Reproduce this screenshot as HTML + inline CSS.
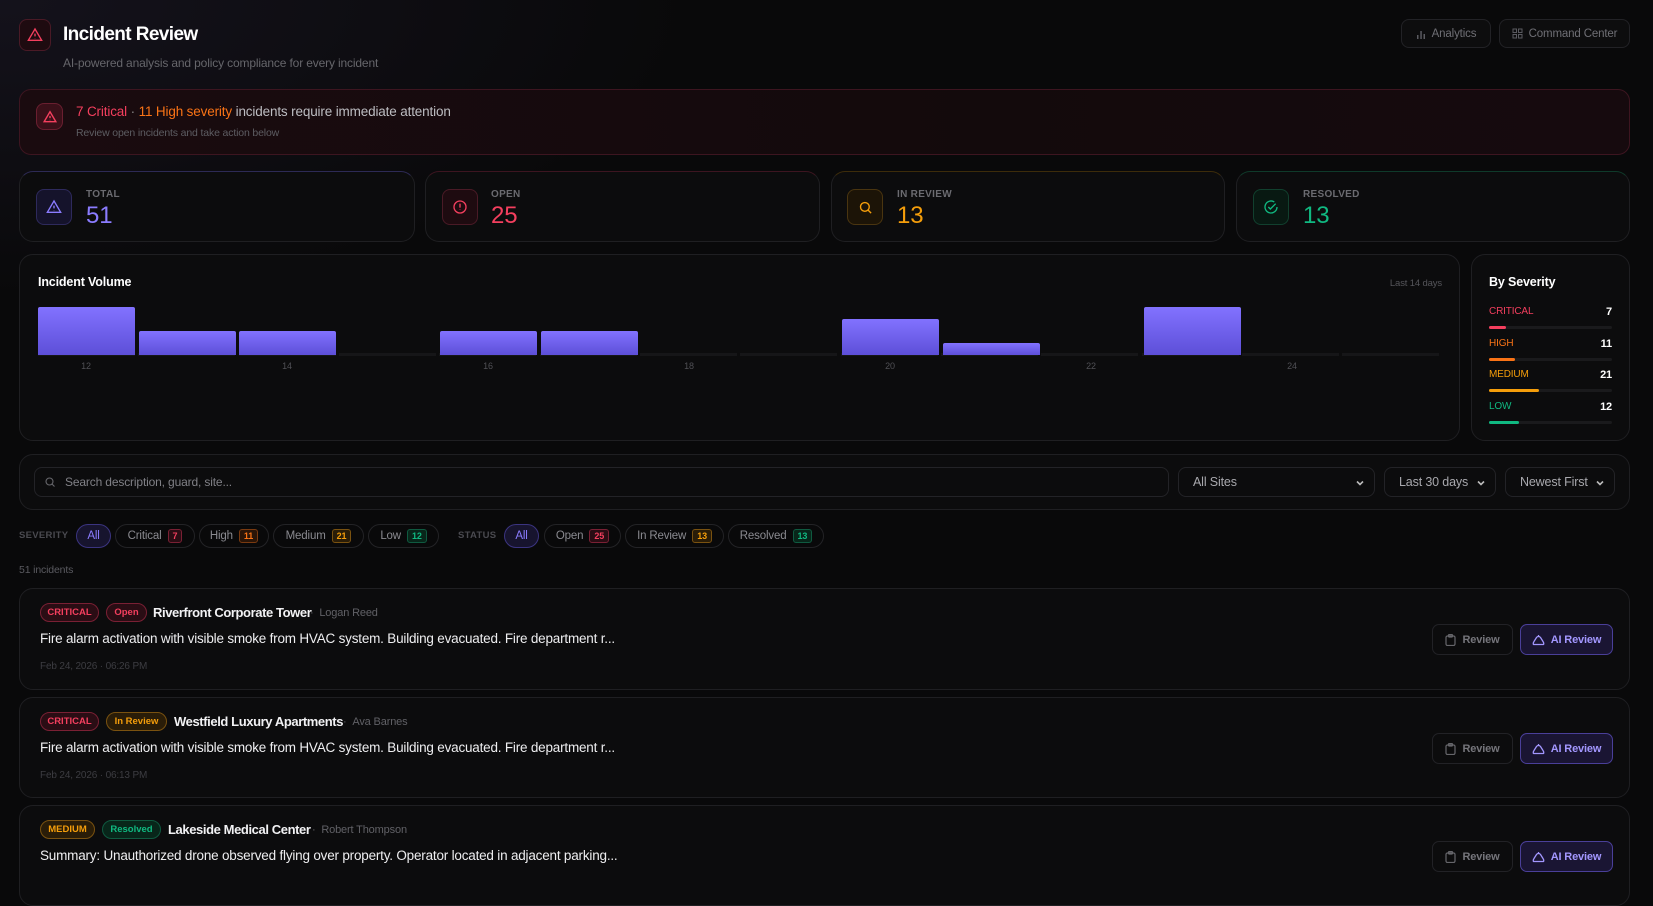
<!DOCTYPE html>
<html><head><meta charset="utf-8"><style>
*{box-sizing:border-box;margin:0;padding:0}
body{width:1653px;height:862px;overflow:hidden;background:#09090a;font-family:"Liberation Sans",sans-serif;color:#e8e8ea;position:relative;letter-spacing:-0.15px}
.bgg{position:absolute;left:0;top:0;width:700px;height:300px;background:radial-gradient(ellipse at 0 0,rgba(60,50,90,.22),transparent 70%)}
.abs{position:absolute}
.card{position:absolute;background:#0c0c0d;border:1px solid #1f1f22;border-radius:14px}
.ib{position:absolute;border-radius:8px;display:flex;align-items:center;justify-content:center}
.lbl{font-size:10px;color:#6b6b70;font-weight:bold;letter-spacing:.3px}
.btn{position:absolute;border:1px solid #222226;border-radius:8px;background:#0d0d0e;color:#6f6f75;font-size:11.5px;display:flex;align-items:center;justify-content:center;gap:6px}
.sel{position:absolute;top:467px;height:30px;border:1px solid #232327;border-radius:8px;background:#0c0c0d;color:#a8a8ad;font-size:12.5px;display:flex;align-items:center;padding-left:14px}
.sel svg{position:absolute;right:9px;top:10px}
.chip{position:absolute;top:524px;height:24px;border:1px solid #232326;border-radius:12px;font-size:11.5px;color:#8a8a90;display:flex;align-items:center;justify-content:center;gap:6px}
.cnt{font-size:9px;padding:1px 4px;border-radius:3px;border:1px solid;font-weight:bold}
.bar{position:absolute;width:97px;background:linear-gradient(#8272ff,#5d4fd8);border-radius:2px 2px 0 0}
.base{position:absolute;width:97px;height:3px;background:#161618;top:353px}
.ax{position:absolute;top:361px;font-size:9px;color:#505055;width:40px;text-align:center}
.sv{position:absolute;left:1489px;width:123px}
.sv .n{font-size:10px;display:flex;justify-content:space-between}
.sv .n b{color:#fff;font-size:11px}
.sv .t{margin-top:8px;height:3px;background:#1a1a1c;border-radius:2px}
.sv .t i{display:block;height:3px;border-radius:2px}
.bd{position:absolute;height:19px;border-radius:10px;border:1px solid;font-size:9.5px;display:flex;align-items:center;justify-content:center;font-weight:bold;letter-spacing:0}
.ttl{position:absolute;font-size:13px;font-weight:bold;color:#f2f2f4;letter-spacing:-0.4px}
.who{position:absolute;font-size:11px;color:#616166}
.desc{position:absolute;left:40px;font-size:13.5px;color:#eeeef0;letter-spacing:-0.2px}
.dt{position:absolute;left:40px;font-size:10px;color:#3d3d42}
.rv{position:absolute;left:1432px;width:81px;height:31px;border:1px solid #222226;border-radius:7px;font-size:11px;color:#75757b;display:flex;align-items:center;justify-content:center;gap:6px;font-weight:bold}
.ai{position:absolute;left:1520px;width:93px;height:31px;border:1px solid #4a3f99;background:#1a1533;border-radius:7px;font-size:11px;color:#a397ff;display:flex;align-items:center;justify-content:center;gap:6px;font-weight:bold}
</style></head><body>
<div class="bgg"></div>

<div class="ib" style="left:19px;top:19px;width:32px;height:32px;border:1px solid #4a1a26;background:#1e0b10"><svg width="16" height="16" viewBox="0 0 24 24" fill="none" stroke="#f43f5e" stroke-width="2"><path d="M12 3L2 20h20L12 3z"/><path d="M12 10v4M12 17v.5"/></svg></div>
<div class="abs" style="left:63px;top:24px;font-size:19px;font-weight:bold;color:#fff;letter-spacing:-0.6px">Incident Review</div>
<div class="abs" style="left:63px;top:56px;font-size:12px;color:#66666b">AI-powered analysis and policy compliance for every incident</div>

<div class="btn" style="left:1401px;top:19px;width:90px;height:29px"><svg width="10" height="10" viewBox="0 0 10 10" fill="#5a5a60"><rect x="1" y="6" width="1.5" height="4"/><rect x="4.3" y="2" width="1.5" height="8"/><rect x="7.5" y="5" width="1.5" height="5"/></svg>Analytics</div>
<div class="btn" style="left:1499px;top:19px;width:131px;height:29px"><svg width="11" height="11" viewBox="0 0 11 11" fill="none" stroke="#5a5a60"><rect x="1" y="1" width="3.5" height="3.5"/><rect x="6.5" y="1" width="3.5" height="3.5"/><rect x="1" y="6.5" width="3.5" height="3.5"/><rect x="6.5" y="6.5" width="3.5" height="3.5"/></svg>Command Center</div>

<div class="abs" style="left:19px;top:89px;width:1611px;height:66px;border:1px solid #3d1520;border-radius:12px;background:linear-gradient(90deg,#1a0b0f,#130a0c 60%,#160a0e)"></div>
<div class="ib" style="left:36px;top:103px;width:27px;height:27px;border:1px solid #6a1f30;background:#3a1019"><svg width="14" height="14" viewBox="0 0 24 24" fill="none" stroke="#f43f5e" stroke-width="2.4"><path d="M12 3L2 20h20L12 3z"/><path d="M12 10v4M12 17v.5"/></svg></div>
<div class="abs" style="left:76px;top:104px;font-size:13.5px;color:#bdbdc2"><span style="color:#f43f5e">7 Critical</span> <span style="color:#888">·</span> <span style="color:#f97316">11 High severity</span> incidents require immediate attention</div>
<div class="abs" style="left:76px;top:127px;font-size:10.5px;color:#5d5d62">Review open incidents and take action below</div>

<!-- stats -->
<div class="card" style="left:19px;top:171px;width:396px;height:71px;border-top-color:#2d2a55"></div>
<div class="ib" style="left:36px;top:189px;width:36px;height:36px;border:1px solid #2e2a5c;background:#15132b"><svg width="16" height="16" viewBox="0 0 24 24" fill="none" stroke="#8b7cff" stroke-width="2"><path d="M12 3L2 20h20L12 3z"/><path d="M12 10v4M12 17v.5"/></svg></div>
<div class="abs lbl" style="left:86px;top:189px">TOTAL</div><div class="abs" style="left:86px;top:202px;font-size:24px;color:#8b7cff">51</div>

<div class="card" style="left:425px;top:171px;width:395px;height:71px;border-top-color:#3d1520"></div>
<div class="ib" style="left:442px;top:189px;width:36px;height:36px;border:1px solid #4a1a26;background:#1e0b10"><svg width="16" height="16" viewBox="0 0 24 24" fill="none" stroke="#f43f5e" stroke-width="2"><circle cx="12" cy="12" r="9"/><path d="M12 7v6M12 16v.5"/></svg></div>
<div class="abs lbl" style="left:491px;top:189px">OPEN</div><div class="abs" style="left:491px;top:202px;font-size:24px;color:#f43f5e">25</div>

<div class="card" style="left:831px;top:171px;width:394px;height:71px;border-top-color:#3d2c0a"></div>
<div class="ib" style="left:847px;top:189px;width:36px;height:36px;border:1px solid #4a3510;background:#1c1407"><svg width="15" height="15" viewBox="0 0 24 24" fill="none" stroke="#f59e0b" stroke-width="2.2"><circle cx="11" cy="11" r="7"/><path d="M16 16l5 5"/></svg></div>
<div class="abs lbl" style="left:897px;top:189px">IN REVIEW</div><div class="abs" style="left:897px;top:202px;font-size:24px;color:#f59e0b">13</div>

<div class="card" style="left:1236px;top:171px;width:394px;height:71px;border-top-color:#0f3a2a"></div>
<div class="ib" style="left:1253px;top:189px;width:36px;height:36px;border:1px solid #11402e;background:#081912"><svg width="16" height="16" viewBox="0 0 24 24" fill="none" stroke="#10b981" stroke-width="2"><path d="M21 12a9 9 0 1 1-4-7.5"/><path d="M8 12l3 3 8-8"/></svg></div>
<div class="abs lbl" style="left:1303px;top:189px">RESOLVED</div><div class="abs" style="left:1303px;top:202px;font-size:24px;color:#10b981">13</div>

<!-- chart -->
<div class="card" style="left:19px;top:254px;width:1441px;height:187px"></div>
<div class="abs" style="left:38px;top:275px;font-size:12.5px;font-weight:bold;color:#fff">Incident Volume</div>
<div class="abs" style="left:1380px;top:278px;font-size:9.5px;color:#55555a;width:62px;text-align:right">Last 14 days</div>
<div class="base" style="left:38px"></div><div class="base" style="left:138px"></div><div class="base" style="left:239px"></div><div class="base" style="left:339px"></div><div class="base" style="left:439px"></div><div class="base" style="left:540px"></div><div class="base" style="left:640px"></div><div class="base" style="left:740px"></div><div class="base" style="left:841px"></div><div class="base" style="left:941px"></div><div class="base" style="left:1041px"></div><div class="base" style="left:1142px"></div><div class="base" style="left:1242px"></div><div class="base" style="left:1342px"></div>
<div class="bar" style="left:38px;top:307px;height:48px"></div>
<div class="bar" style="left:139px;top:331px;height:24px"></div>
<div class="bar" style="left:239px;top:331px;height:24px"></div>
<div class="bar" style="left:440px;top:331px;height:24px"></div>
<div class="bar" style="left:541px;top:331px;height:24px"></div>
<div class="bar" style="left:842px;top:319px;height:36px"></div>
<div class="bar" style="left:943px;top:343px;height:12px"></div>
<div class="bar" style="left:1144px;top:307px;height:48px"></div>
<div class="ax" style="left:66px">12</div><div class="ax" style="left:267px">14</div><div class="ax" style="left:468px">16</div><div class="ax" style="left:669px">18</div><div class="ax" style="left:870px">20</div><div class="ax" style="left:1071px">22</div><div class="ax" style="left:1272px">24</div>

<div class="card" style="left:1471px;top:254px;width:159px;height:187px"></div>
<div class="abs" style="left:1489px;top:275px;font-size:12.5px;font-weight:bold;color:#fff">By Severity</div>
<div class="sv" style="top:306px"><div class="n"><span style="color:#f43f5e">CRITICAL</span><b>7</b></div><div class="t"><i style="width:14%;background:#f43f5e"></i></div></div>
<div class="sv" style="top:338px"><div class="n"><span style="color:#f97316">HIGH</span><b>11</b></div><div class="t"><i style="width:21%;background:#f97316"></i></div></div>
<div class="sv" style="top:369px"><div class="n"><span style="color:#f59e0b">MEDIUM</span><b>21</b></div><div class="t"><i style="width:41%;background:#f59e0b"></i></div></div>
<div class="sv" style="top:401px"><div class="n"><span style="color:#10b981">LOW</span><b>12</b></div><div class="t"><i style="width:24%;background:#10b981"></i></div></div>

<!-- filters -->
<div class="card" style="left:19px;top:454px;width:1611px;height:56px"></div>
<div class="abs" style="left:34px;top:467px;width:1135px;height:30px;border:1px solid #232327;border-radius:8px;background:#0c0c0d"></div>
<svg class="abs" style="left:44px;top:476px" width="12" height="12" viewBox="0 0 24 24" fill="none" stroke="#66666b" stroke-width="2.2"><circle cx="11" cy="11" r="7"/><path d="M16 16l5 5"/></svg>
<div class="abs" style="left:65px;top:475px;font-size:12px;color:#808086">Search description, guard, site...</div>
<div class="sel" style="left:1178px;width:197px">All Sites<svg width="10" height="10" viewBox="0 0 10 10" fill="none" stroke="#bbb" stroke-width="1.6"><path d="M2 3.5l3 3 3-3"/></svg></div>
<div class="sel" style="left:1384px;width:112px">Last 30 days<svg width="10" height="10" viewBox="0 0 10 10" fill="none" stroke="#bbb" stroke-width="1.6"><path d="M2 3.5l3 3 3-3"/></svg></div>
<div class="sel" style="left:1505px;width:110px">Newest First<svg width="10" height="10" viewBox="0 0 10 10" fill="none" stroke="#bbb" stroke-width="1.6"><path d="M2 3.5l3 3 3-3"/></svg></div>

<div class="abs lbl" style="left:19px;top:530px;color:#4a4a50;font-size:9.5px">SEVERITY</div>
<div class="chip" style="left:76px;width:35px;border-color:#3b3480;background:#17142e;color:#8b7cff">All</div>
<div class="chip" style="left:115px;width:80px">Critical<span class="cnt" style="color:#f43f5e;border-color:#7a2034;background:#2a0d14">7</span></div>
<div class="chip" style="left:199px;width:70px">High<span class="cnt" style="color:#f97316;border-color:#7a3a10;background:#2a1508">11</span></div>
<div class="chip" style="left:273px;width:91px">Medium<span class="cnt" style="color:#f59e0b;border-color:#7a5210;background:#2a1d08">21</span></div>
<div class="chip" style="left:368px;width:71px">Low<span class="cnt" style="color:#10b981;border-color:#0f5a40;background:#08261a">12</span></div>
<div class="abs lbl" style="left:458px;top:530px;color:#4a4a50;font-size:9.5px">STATUS</div>
<div class="chip" style="left:504px;width:35px;border-color:#3b3480;background:#17142e;color:#8b7cff">All</div>
<div class="chip" style="left:544px;width:77px">Open<span class="cnt" style="color:#f43f5e;border-color:#7a2034;background:#2a0d14">25</span></div>
<div class="chip" style="left:625px;width:99px">In Review<span class="cnt" style="color:#f59e0b;border-color:#7a5210;background:#2a1d08">13</span></div>
<div class="chip" style="left:728px;width:96px">Resolved<span class="cnt" style="color:#10b981;border-color:#0f5a40;background:#08261a">13</span></div>

<div class="abs" style="left:19px;top:564px;font-size:10.5px;color:#5a5a60">51 incidents</div>

<!-- incident 1 -->
<div class="card" style="left:19px;top:588px;width:1611px;height:102px"></div>
<div class="bd" style="left:40px;top:603px;width:59px;color:#f43f5e;border-color:#7a2034;background:#2a0d14">CRITICAL</div>
<div class="bd" style="left:106px;top:603px;width:41px;color:#f43f5e;border-color:#7a2034;background:#2a0d14">Open</div>
<div class="ttl" style="left:153px;top:605px">Riverfront Corporate Tower</div>
<div class="who" style="left:310px;top:607px">· &nbsp;Logan Reed</div>
<div class="desc" style="top:631px">Fire alarm activation with visible smoke from HVAC system. Building evacuated. Fire department r...</div>
<div class="dt" style="top:661px">Feb 24, 2026 · 06:26 PM</div>
<div class="rv" style="top:624px"><svg width="11" height="12" viewBox="0 0 11 12" fill="none" stroke="#66666b" stroke-width="1.2"><rect x="1" y="2" width="9" height="9.5" rx="1.5"/><rect x="3.5" y="0.6" width="4" height="2.4" rx=".6"/></svg>Review</div>
<div class="ai" style="top:624px"><svg width="13" height="12" viewBox="0 0 13 12" fill="none" stroke="#a397ff" stroke-width="1.3"><path d="M6.5 1L6.5 2.5M2 10.5C1 10.5 1 9 2 7.5L4.5 3.5C5.5 2.2 7.5 2.2 8.5 3.5L11 7.5C12 9 12 10.5 11 10.5Z"/></svg>AI Review</div>

<!-- incident 2 -->
<div class="card" style="left:19px;top:697px;width:1611px;height:101px"></div>
<div class="bd" style="left:40px;top:712px;width:59px;color:#f43f5e;border-color:#7a2034;background:#2a0d14">CRITICAL</div>
<div class="bd" style="left:106px;top:712px;width:61px;color:#f59e0b;border-color:#7a5210;background:#2a1d08">In Review</div>
<div class="ttl" style="left:174px;top:714px">Westfield Luxury Apartments</div>
<div class="who" style="left:343px;top:716px">· &nbsp;Ava Barnes</div>
<div class="desc" style="top:740px">Fire alarm activation with visible smoke from HVAC system. Building evacuated. Fire department r...</div>
<div class="dt" style="top:770px">Feb 24, 2026 · 06:13 PM</div>
<div class="rv" style="top:733px"><svg width="11" height="12" viewBox="0 0 11 12" fill="none" stroke="#66666b" stroke-width="1.2"><rect x="1" y="2" width="9" height="9.5" rx="1.5"/><rect x="3.5" y="0.6" width="4" height="2.4" rx=".6"/></svg>Review</div>
<div class="ai" style="top:733px"><svg width="13" height="12" viewBox="0 0 13 12" fill="none" stroke="#a397ff" stroke-width="1.3"><path d="M6.5 1L6.5 2.5M2 10.5C1 10.5 1 9 2 7.5L4.5 3.5C5.5 2.2 7.5 2.2 8.5 3.5L11 7.5C12 9 12 10.5 11 10.5Z"/></svg>AI Review</div>

<!-- incident 3 -->
<div class="card" style="left:19px;top:805px;width:1611px;height:101px"></div>
<div class="bd" style="left:40px;top:820px;width:55px;color:#f59e0b;border-color:#7a5210;background:#2a1d08">MEDIUM</div>
<div class="bd" style="left:102px;top:820px;width:59px;color:#10b981;border-color:#0f5a40;background:#08261a">Resolved</div>
<div class="ttl" style="left:168px;top:822px">Lakeside Medical Center</div>
<div class="who" style="left:312px;top:824px">· &nbsp;Robert Thompson</div>
<div class="desc" style="top:848px">Summary: Unauthorized drone observed flying over property. Operator located in adjacent parking...</div>
<div class="rv" style="top:841px"><svg width="11" height="12" viewBox="0 0 11 12" fill="none" stroke="#66666b" stroke-width="1.2"><rect x="1" y="2" width="9" height="9.5" rx="1.5"/><rect x="3.5" y="0.6" width="4" height="2.4" rx=".6"/></svg>Review</div>
<div class="ai" style="top:841px"><svg width="13" height="12" viewBox="0 0 13 12" fill="none" stroke="#a397ff" stroke-width="1.3"><path d="M6.5 1L6.5 2.5M2 10.5C1 10.5 1 9 2 7.5L4.5 3.5C5.5 2.2 7.5 2.2 8.5 3.5L11 7.5C12 9 12 10.5 11 10.5Z"/></svg>AI Review</div>
</body></html>
